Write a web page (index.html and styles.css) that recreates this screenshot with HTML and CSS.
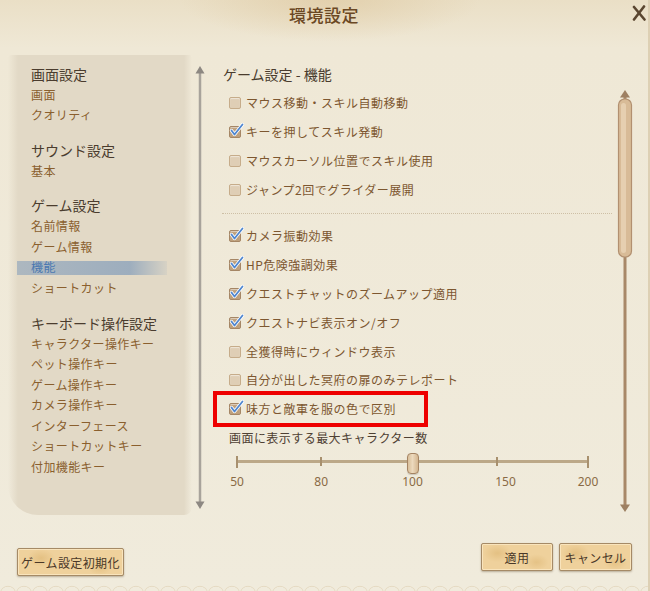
FILE: index.html
```html
<!DOCTYPE html>
<html lang="ja">
<head>
<meta charset="utf-8">
<title>環境設定</title>
<link rel="stylesheet" href="styles.css">
</head>
<body>
<div class="window">
  <header class="titlebar">
    <h1 class="title">環境設定</h1>
    <button class="close" aria-label="閉じる">
      <svg width="14" height="16" viewBox="0 0 14 16"><path d="M2 2 L12.5 14.5 M12 1.5 L2 14.5" stroke="#5a4630" stroke-width="2.6" stroke-linecap="round" fill="none"/></svg>
    </button>
  </header>

  <div class="main">
    <nav class="nav">
      <div class="group">
        <div class="group-title">画面設定</div>
        <ul class="items"><li>画面</li><li>クオリティ</li></ul>
      </div>
      <div class="group">
        <div class="group-title">サウンド設定</div>
        <ul class="items"><li>基本</li></ul>
      </div>
      <div class="group">
        <div class="group-title">ゲーム設定</div>
        <ul class="items"><li>名前情報</li><li>ゲーム情報</li><li class="active">機能</li><li>ショートカット</li></ul>
      </div>
      <div class="group">
        <div class="group-title">キーボード操作設定</div>
        <ul class="items"><li>キャラクター操作キー</li><li>ペット操作キー</li><li>ゲーム操作キー</li><li>カメラ操作キー</li><li>インターフェース</li><li>ショートカットキー</li><li>付加機能キー</li></ul>
      </div>
    </nav>

    <div class="scroll-left">
      <svg width="16" height="452" viewBox="0 0 16 452">
        <line x1="8" y1="10" x2="8" y2="444" stroke="#a8a39b" stroke-width="2.5"/>
        <polygon points="8,6 3.5,13.5 12.5,13.5" fill="#8d8882"/>
        <polygon points="8,449 3.5,441.5 12.5,441.5" fill="#8d8882"/>
      </svg>
    </div>

    <section class="content">
      <h2 class="heading">ゲーム設定 - 機能</h2>
      <ul class="opts">
        <li><span class="cb"></span><span class="lbl">マウス移動・スキル自動移動</span></li>
        <li><span class="cb on"><svg class="tick-mark" width="16" height="16" viewBox="0 0 16 16"><path d="M2.5 7.5 L5.5 11.5 L13.5 1.5" stroke="#fff" stroke-width="3.4" fill="none" stroke-linecap="round" stroke-linejoin="round"/><path d="M2.5 7.5 L5.5 11.5 L13.5 1.5" stroke="#4f86cf" stroke-width="1.8" fill="none" stroke-linecap="round" stroke-linejoin="round"/></svg></span><span class="lbl">キーを押してスキル発動</span></li>
        <li><span class="cb"></span><span class="lbl">マウスカーソル位置でスキル使用</span></li>
        <li><span class="cb"></span><span class="lbl">ジャンプ2回でグライダー展開</span></li>
      </ul>
      <div class="sep"></div>
      <ul class="opts second">
        <li><span class="cb on"><svg class="tick-mark" width="16" height="16" viewBox="0 0 16 16"><path d="M2.5 7.5 L5.5 11.5 L13.5 1.5" stroke="#fff" stroke-width="3.4" fill="none" stroke-linecap="round" stroke-linejoin="round"/><path d="M2.5 7.5 L5.5 11.5 L13.5 1.5" stroke="#4f86cf" stroke-width="1.8" fill="none" stroke-linecap="round" stroke-linejoin="round"/></svg></span><span class="lbl">カメラ振動効果</span></li>
        <li><span class="cb on"><svg class="tick-mark" width="16" height="16" viewBox="0 0 16 16"><path d="M2.5 7.5 L5.5 11.5 L13.5 1.5" stroke="#fff" stroke-width="3.4" fill="none" stroke-linecap="round" stroke-linejoin="round"/><path d="M2.5 7.5 L5.5 11.5 L13.5 1.5" stroke="#4f86cf" stroke-width="1.8" fill="none" stroke-linecap="round" stroke-linejoin="round"/></svg></span><span class="lbl">HP危険強調効果</span></li>
        <li><span class="cb on"><svg class="tick-mark" width="16" height="16" viewBox="0 0 16 16"><path d="M2.5 7.5 L5.5 11.5 L13.5 1.5" stroke="#fff" stroke-width="3.4" fill="none" stroke-linecap="round" stroke-linejoin="round"/><path d="M2.5 7.5 L5.5 11.5 L13.5 1.5" stroke="#4f86cf" stroke-width="1.8" fill="none" stroke-linecap="round" stroke-linejoin="round"/></svg></span><span class="lbl">クエストチャットのズームアップ適用</span></li>
        <li><span class="cb on"><svg class="tick-mark" width="16" height="16" viewBox="0 0 16 16"><path d="M2.5 7.5 L5.5 11.5 L13.5 1.5" stroke="#fff" stroke-width="3.4" fill="none" stroke-linecap="round" stroke-linejoin="round"/><path d="M2.5 7.5 L5.5 11.5 L13.5 1.5" stroke="#4f86cf" stroke-width="1.8" fill="none" stroke-linecap="round" stroke-linejoin="round"/></svg></span><span class="lbl">クエストナビ表示オン/オフ</span></li>
        <li><span class="cb"></span><span class="lbl">全獲得時にウィンドウ表示</span></li>
        <li><span class="cb"></span><span class="lbl">自分が出した冥府の扉のみテレポート</span></li>
        <li class="hl"><span class="cb on"><svg class="tick-mark" width="16" height="16" viewBox="0 0 16 16"><path d="M2.5 7.5 L5.5 11.5 L13.5 1.5" stroke="#fff" stroke-width="3.4" fill="none" stroke-linecap="round" stroke-linejoin="round"/><path d="M2.5 7.5 L5.5 11.5 L13.5 1.5" stroke="#4f86cf" stroke-width="1.8" fill="none" stroke-linecap="round" stroke-linejoin="round"/></svg></span><span class="lbl">味方と敵軍を服の色で区別</span></li>
      </ul>
      <div class="slider-label">画面に表示する最大キャラクター数</div>
      <div class="slider">
        <span class="tick end" style="left:0%"></span>
        <span class="tick" style="left:24%"></span>
        <span class="tick" style="left:74%"></span>
        <span class="tick end" style="left:100%"></span>
        <span class="thumb" style="left:50%"></span>
      </div>
      <div class="scale">
        <span style="left:0%">50</span>
        <span style="left:24%">80</span>
        <span style="left:50%">100</span>
        <span style="left:76.5%">150</span>
        <span style="left:100%">200</span>
      </div>
    </section>

    <div class="scroll-right">
      <svg width="26" height="430" viewBox="0 0 26 430">
        <line x1="13" y1="8" x2="13" y2="422" stroke="#a88868" stroke-width="3"/>
        <polygon points="13,4 8,11.5 18,11.5" fill="#9e8062"/>
        <polygon points="13,426 8,418.5 18,418.5" fill="#9e8062"/>
        <rect x="6.5" y="13" width="13" height="158" rx="6" fill="#d8bb97" stroke="#b29070" stroke-width="1.2"/>
        <rect x="9" y="17" width="5" height="150" rx="2.5" fill="#e6cfb0"/>
      </svg>
    </div>
  </div>

  <footer class="footer">
    <button class="btn reset">ゲーム設定初期化</button>
    <div class="actions">
      <button class="btn apply">適用</button>
      <button class="btn cancel">キャンセル</button>
    </div>
  </footer>
</div>
</body>
</html>
```

FILE: styles.css
```css
*, *::before, *::after { box-sizing: border-box; margin: 0; padding: 0; }
html, body { width: 650px; height: 591px; overflow: hidden; }
body {
  font-family: "Noto Sans CJK JP", "Noto Sans", sans-serif;
  background: #efe9d8;
}
ul { list-style: none; }

.window {
  width: 650px;
  height: 591px;
  display: flex;
  flex-direction: column;
  background:
    radial-gradient(ellipse 200px 55px at 330px 0, rgba(220, 196, 152, 0.55), rgba(220, 196, 152, 0) 75%),
    linear-gradient(#eadfc6 0, #efe8d6 48px, #f0ebdc 100%);
  border-right: 2px solid #ddd0b4;
}

.titlebar {
  height: 52px;
  display: grid;
  grid-template-columns: 1fr auto 1fr;
  align-items: start;
}
.title {
  grid-column: 2;
  font-size: 17px;
  font-weight: 500;
  line-height: 30px;
  color: #6b4824;
  letter-spacing: 0.5px;
}
.close {
  grid-column: 3;
  justify-self: end;
  background: none;
  border: 0;
  margin: 5px 2px 0 0;
  width: 14px;
  height: 16px;
  display: block;
}

.main {
  display: flex;
  height: 478px;
}

/* left navigation */
.nav {
  margin: 3px 0 0 8px;
  width: 184px;
  height: 460px;
  padding: 8.5px 0 0 23px;
  background:
    linear-gradient(90deg, rgba(226, 218, 201, 0) 0, #e2d9c6 10px, #e2d9c6 calc(100% - 8px), rgba(226, 218, 201, 0) 100%);
  border-radius: 4px 2px 8px 30px;
}
.group + .group { margin-top: 14.2px; }
.group-title {
  font-size: 14px;
  line-height: 21px;
  color: #4a3c2e;
}
.items li {
  font-size: 12px;
  letter-spacing: 0.4px;
  line-height: 20.5px;
  color: #8a5f2e;
}
.items li.active {
  color: #4a78b0;
  margin-left: -14px;
  padding-left: 14px;
  width: 150px;
  background: linear-gradient(90deg, rgba(120, 150, 185, 0.5), rgba(120, 150, 185, 0.65) 75%, rgba(120, 150, 185, 0.1));
  background-size: 100% 14px;
  background-position: 0 4px;
  background-repeat: no-repeat;
}

.scroll-left {
  width: 16px;
  margin-top: 8px;
  height: 452px;
}
.scroll-left svg { display: block; }

/* content */
.content {
  width: 397px;
  margin-left: 7px;
  padding-top: 11.5px;
}
.heading {
  font-size: 14px;
  font-weight: 400;
  line-height: 21px;
  padding-left: 8px;
  color: #4a3c2e;
}
.opts { margin-top: 4px; }
.opts li {
  height: 29px;
  display: flex;
  align-items: center;
  padding-left: 14px;
  position: relative;
}
.opts.second { margin-top: 0; }
.opts.second li { height: 28.8px; }

.cb {
  width: 12px;
  height: 12px;
  flex: none;
  margin-right: 5px;
  border-radius: 2px;
  background: #dfceb5;
  border: 1px solid #c6ac8a;
  box-shadow: inset 0 1px 1px rgba(255, 255, 255, 0.5);
  position: relative;
}
.cb.on {
  background: #bea07c;
  border-color: #a58665;
}
.tick-mark {
  position: absolute;
  left: -1px;
  top: -4px;
  overflow: visible;
}
.lbl {
  font-size: 12px;
  letter-spacing: 0.5px;
  color: #7d5730;
  line-height: 16px;
}

.sep {
  margin: 8.5px 0 8px 7px;
  height: 1px;
  border-top: 1px dotted #cdbfa5;
}

.opts li.hl::after {
  content: "";
  position: absolute;
  left: -2px;
  top: -3.4px;
  width: 215px;
  height: 36px;
  border: 4.5px solid #ee0000;
}

.slider-label {
  margin-top: 4.8px;
  padding-left: 14px;
  font-size: 12px;
  letter-spacing: 0.45px;
  line-height: 20px;
  color: #4e4033;
}
.slider {
  position: relative;
  margin-left: 22px;
  width: 351px;
  height: 26px;
}
.slider::before {
  content: "";
  position: absolute;
  left: 0;
  right: 0;
  top: 12px;
  height: 3px;
  border-radius: 2px;
  background: #bca888;
}
.tick {
  position: absolute;
  top: 9px;
  width: 2px;
  height: 9px;
  margin-left: -1px;
  background: #a8906e;
}
.tick.end { top: 7.5px; height: 12px; }
.thumb {
  position: absolute;
  top: 5px;
  width: 12px;
  height: 21px;
  margin-left: -6px;
  border-radius: 4px;
  background: linear-gradient(90deg, #d9bf9a, #ecd9bd 45%, #d4b690);
  border: 1px solid #a58463;
  box-shadow: 0 1px 1px rgba(0, 0, 0, 0.15);
}
.scale {
  position: relative;
  margin-left: 22px;
  width: 351px;
  height: 16px;
}
.scale span {
  position: absolute;
  top: 0;
  transform: translateX(-50%);
  font-family: "Noto Sans", sans-serif;
  font-size: 12px;
  line-height: 16px;
  color: #8a6a45;
}

.scroll-right {
  width: 26px;
  margin: 34px 0 0 0;
  height: 430px;
}
.scroll-right svg { display: block; }

/* footer */
.footer {
  height: 61px;
  display: flex;
  justify-content: space-between;
  align-items: flex-start;
  padding: 0 16px 0 17px;
  background-image: radial-gradient(circle at 8px 16px, rgba(0,0,0,0) 7px, rgba(214, 195, 160, 0.45) 7.6px, rgba(0,0,0,0) 8.6px);
  background-size: 16px 14px;
  background-position: 0 48px;
  background-repeat: repeat-x;
}
.actions {
  display: flex;
  gap: 6px;
  margin-top: 13px;
}
.btn {
  height: 28px;
  font-family: "Noto Sans CJK JP", "Noto Sans", sans-serif;
  font-size: 12px;
  letter-spacing: 0.4px;
  color: #4a3828;
  border: 1px solid #a58a66;
  border-radius: 2px;
  background:
    radial-gradient(ellipse 14px 9px at 22% 35%, rgba(214, 172, 100, 0.45), rgba(214, 172, 100, 0) 100%),
    radial-gradient(ellipse 12px 8px at 78% 70%, rgba(214, 172, 100, 0.4), rgba(214, 172, 100, 0) 100%),
    #efd19c;
  box-shadow: inset 0 0 0 1px rgba(255, 240, 210, 0.6), 0 1px 2px rgba(80, 60, 30, 0.35);
}
.reset {
  width: 107px;
  margin-top: 18px;
}
.apply { width: 72px; }
.cancel { width: 73px; }
```
